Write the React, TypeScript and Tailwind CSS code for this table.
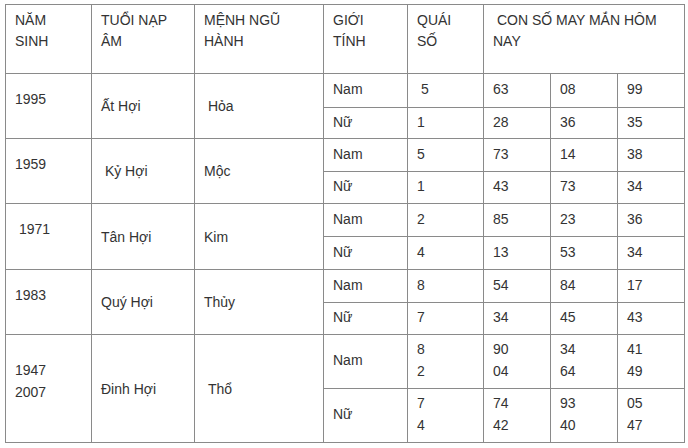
const NB = "\u00a0";

type Group = {
  year: string[];
  tuoi: string;
  menh: string;
  rows: { gt: string; qs: string[]; nums: string[][] }[];
};

const groups: Group[] = [
  {
    year: ["1995"],
    tuoi: "Ất Hợi",
    menh: NB + "Hỏa",
    rows: [
      { gt: "Nam", qs: [NB + "5"], nums: [["63"], ["08"], ["99"]] },
      { gt: "Nữ", qs: ["1"], nums: [["28"], ["36"], ["35"]] },
    ],
  },
  {
    year: ["1959"],
    tuoi: NB + "Kỷ Hợi",
    menh: "Mộc",
    rows: [
      { gt: "Nam", qs: ["5"], nums: [["73"], ["14"], ["38"]] },
      { gt: "Nữ", qs: ["1"], nums: [["43"], ["73"], ["34"]] },
    ],
  },
  {
    year: [NB + "1971"],
    tuoi: "Tân Hợi",
    menh: "Kim",
    rows: [
      { gt: "Nam", qs: ["2"], nums: [["85"], ["23"], ["36"]] },
      { gt: "Nữ", qs: ["4"], nums: [["13"], ["53"], ["34"]] },
    ],
  },
  {
    year: ["1983"],
    tuoi: "Quý Hợi",
    menh: "Thủy",
    rows: [
      { gt: "Nam", qs: ["8"], nums: [["54"], ["84"], ["17"]] },
      { gt: "Nữ", qs: ["7"], nums: [["34"], ["45"], ["43"]] },
    ],
  },
  {
    year: ["1947", "2007"],
    tuoi: "Đinh Hợi",
    menh: NB + "Thổ",
    rows: [
      { gt: "Nam", qs: ["8", "2"], nums: [["90", "04"], ["34", "64"], ["41", "49"]] },
      { gt: "Nữ", qs: ["7", "4"], nums: [["74", "42"], ["93", "40"], ["05", "47"]] },
    ],
  },
];

const cell = "border-r border-b border-[#8a8a8a] pl-[9px] flex items-center";
const head = "border-r border-b border-[#8a8a8a] pl-[9px] pt-[5px] leading-[21px]";
const small = `${cell} pb-[3px]`;

const Lines = ({ lines }: { lines: string[] }) => (
  <div>
    {lines.map((l, i) => (
      <div key={i}>{l}</div>
    ))}
  </div>
);

export default function App() {
  return (
    <div
      className="h-[448px] w-[688px] bg-white pl-[5px] pt-[4px] text-[14px] leading-[22px] text-[#333]"
      style={{ fontFamily: '"Liberation Sans", Arial, sans-serif' }}
    >
      <div className="grid w-[680px] grid-cols-[86px_103px_129px_84px_76px_67px_67px_67px] grid-rows-[69px_34px_31px_33px_32px_33px_33px_33px_32px_54px_54px] border-l border-t border-[#8a8a8a]">
        {/* header */}
        <div className={head}>
          <Lines lines={["NĂM", "SINH"]} />
        </div>
        <div className={head}>
          <Lines lines={["TUỔI NẠP", "ÂM"]} />
        </div>
        <div className={head}>
          <Lines lines={["MỆNH NGŨ", "HÀNH"]} />
        </div>
        <div className={head}>
          <Lines lines={["GIỚI", "TÍNH"]} />
        </div>
        <div className={head}>
          <Lines lines={["QUÁI", "SỐ"]} />
        </div>
        <div className={`${head} col-span-3`}>
          <Lines lines={[NB + "CON SỐ MAY MẮN HÔM", "NAY"]} />
        </div>

        {groups.map((g) => [
          <div key={g.tuoi + "y"} className={`${cell} row-span-2 pb-[15px]`}>
            <Lines lines={g.year} />
          </div>,
          <div key={g.tuoi + "t"} className={`${cell} row-span-2`}>
            {g.tuoi}
          </div>,
          <div key={g.tuoi + "m"} className={`${cell} row-span-2`}>
            {g.menh}
          </div>,
          ...g.rows.map((r) => [
            <div key={g.tuoi + r.gt + "g"} className={small}>
              {r.gt}
            </div>,
            <div key={g.tuoi + r.gt + "q"} className={small}>
              <Lines lines={r.qs} />
            </div>,
            ...r.nums.map((n, i) => (
              <div key={g.tuoi + r.gt + i} className={small}>
                <Lines lines={n} />
              </div>
            )),
          ]),
        ])}
      </div>
    </div>
  );
}
